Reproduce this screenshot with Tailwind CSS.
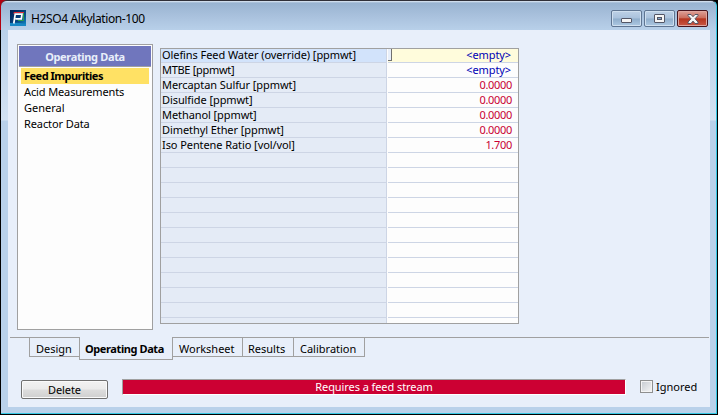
<!DOCTYPE html>
<html lang="en">
<head>
<meta charset="utf-8">
<title>H2SO4 Alkylation-100</title>
<script src="https://cdn.jsdelivr.net/npm/@tailwindcss/browser@4"></script>
</head>
<body class="w-[718px] h-[415px] overflow-hidden bg-black font-['Noto_Sans','Open_Sans',sans-serif] text-[11px] leading-[16px] text-black whitespace-nowrap">
<div class="relative w-[718px] h-[415px] bg-[linear-gradient(to_bottom,#b00010_0px,#b00010_30px,#000_30px)] overflow-hidden">
<div class="absolute inset-0 bg-black left-[8px]"></div>
<div class="absolute left-px top-0 w-[716px] h-[414px] rounded-t-[6px] border-t border-t-[#303038] border-r border-r-[#35c8e4] border-b border-b-[#35c8e4] bg-[linear-gradient(to_bottom,#e1ebf5_0px,#99b4d1_2px,#a9c1dd_15px,#b9d1ea_30px,#d3e2f2_119px,#b9d1ea_120px,#b9d1ea_100%)] flex flex-col pl-[7px] pr-[6px] pb-[6px]">
  <header class="h-[29px] shrink-0 flex items-start">
    <svg class="mt-[9px] ml-[2px] mr-[5px]" width="16" height="16" viewBox="0 0 16 16">
      <defs><linearGradient id="logo" x1="0" y1="0" x2="1" y2="1"><stop offset="0" stop-color="#001c52"/><stop offset=".55" stop-color="#06427e"/><stop offset="1" stop-color="#128fca"/></linearGradient></defs>
      <rect width="16" height="16" fill="url(#logo)"/>
      <path d="M0 13Q7 12 16 14V16H0z" fill="#1787c4"/>
      <path d="M4 4V2.5H14" fill="none" stroke="#e02a35"/>
      <path d="M13.5 3V10.5H8" fill="none" stroke="#2f9e4a"/>
      <path d="M3.8 13.5L5.2 4.2H12L11.3 8.8H5.5" fill="none" stroke="#fff" stroke-width="1.7"/>
    </svg>
    <h1 class="mt-[10px] text-[12px] leading-[16px] tracking-[-0.38px]">H2SO4 Alkylation-100</h1>
    <div class="ml-auto mr-[2px] mt-[9px] flex gap-[2px]">
      <div class="w-[31px] h-[17px] rounded-[2px] border border-[#5f7592] shadow-[inset_0_0_0_1px_#cfdfef] bg-[linear-gradient(#bed1e6_0%,#a9c1dc_48%,#8fadcb_52%,#adc8e2_100%)] flex justify-center">
        <svg width="11" height="5" class="mt-[7px]" viewBox="0 0 11 5"><rect x=".5" y=".5" width="10" height="4" rx=".5" fill="#f5f5f5" stroke="#535666"/></svg>
      </div>
      <div class="w-[31px] h-[17px] rounded-[2px] border border-[#5f7592] shadow-[inset_0_0_0_1px_#cfdfef] bg-[linear-gradient(#bed1e6_0%,#a9c1dc_48%,#8fadcb_52%,#adc8e2_100%)] flex justify-center">
        <svg width="11" height="9" class="mt-[3px]" viewBox="0 0 11 9"><rect x=".5" y=".5" width="10" height="8" rx=".5" fill="#f5f5f5" stroke="#535666"/><rect x="3.5" y="3.5" width="4" height="2" fill="#86a8cc" stroke="#535666"/></svg>
      </div>
      <div class="w-[31px] h-[17px] rounded-[2px] border border-[#47141d] shadow-[inset_0_0_0_1px_#dfa69f] bg-[linear-gradient(#dda198_0%,#cb6d5d_46%,#b5351f_52%,#c95845_100%)] flex justify-center">
        <svg width="12" height="10" class="mt-[3px]" viewBox="0 0 12 10"><path d="M1 .5H4L6 2.7L8 .5H11V1.5L8 4.8L11 8V9.5H8L6 7.1L4 9.5H1V8L4 4.8L1 1.5z" fill="#f5f5f5" stroke="#535666"/></svg>
      </div>
    </div>
  </header>

  <main class="h-[377px] w-[702px] bg-[#e8effa] flex flex-col">
    <section class="flex h-[307px] pl-[9px] pt-[14px] items-start">
      <nav class="w-[136px] h-[286px] border border-[#a0a0a0] bg-[#fdfdfd] p-px">
        <h2 class="h-[21px] border-b border-[#a0a0a0] bg-[#7076bd] text-center text-[#e8effa] font-bold leading-[22px] tracking-[-0.35px]">Operating Data</h2>
        <ul class="mt-px px-[2px] leading-[16px]">
          <li class="h-[16px] pl-[3px] bg-[#ffe164] font-bold tracking-[-0.5px]">Feed Impurities</li>
          <li class="h-[16px] pl-[3px] leading-[15px] tracking-[-0.12px]">Acid Measurements</li>
          <li class="h-[16px] pl-[3px] leading-[15px]">General</li>
          <li class="h-[16px] pl-[3px] leading-[15px] tracking-[-0.1px]">Reactor Data</li>
        </ul>
      </nav>
      <div class="mt-[4px] ml-[7px] w-[359px] h-[276px] border border-[#a0a0a0] flex bg-[#fdfdfd] leading-[14px]">
        <div class="w-[226px] shrink-0 bg-[repeating-linear-gradient(to_bottom,#e4ebf6_0px,#e4ebf6_14px,#cdd5e5_14px,#cdd5e5_15px)] bg-[position:0_-1px] border-r border-[#cdd5e5] tracking-[-0.08px]">
          <div class="h-[13px] pl-px bg-[#d2e3fb] leading-[12px]">Olefins Feed Water (override) [ppmwt]</div>
          <div class="mt-px h-[15px] pl-px tracking-[-0.3px]">MTBE [ppmwt]</div>
          <div class="h-[15px] pl-px">Mercaptan Sulfur [ppmwt]</div>
          <div class="h-[15px] pl-px">Disulfide [ppmwt]</div>
          <div class="h-[15px] pl-px">Methanol [ppmwt]</div>
          <div class="h-[15px] pl-px">Dimethyl Ether [ppmwt]</div>
          <div class="h-[15px] pl-px">Iso Pentene Ratio [vol/vol]</div>
        </div>
        <div class="ml-px flex-1 text-right text-[#c80032] tracking-[-0.3px] bg-[repeating-linear-gradient(to_bottom,#fdfdfd_0px,#fdfdfd_14px,#cdd5e5_14px,#cdd5e5_15px)] bg-[position:0_-1px]">
          <div class="h-[13px] flex justify-between bg-[#fffcdc] text-[#0000b4] leading-[12px] pr-[7px] tracking-[-0.1px]"><span class="w-[4px] h-[12px] bg-[#e8effa] border-r border-b border-[#707070]"></span><span>&lt;empty&gt;</span></div>
          <div class="mt-px h-[15px] pr-[7px] text-[#0000b4] tracking-[-0.1px]">&lt;empty&gt;</div>
          <div class="h-[15px] pr-[6px]">0.0000</div>
          <div class="h-[15px] pr-[6px]">0.0000</div>
          <div class="h-[15px] pr-[6px]">0.0000</div>
          <div class="h-[15px] pr-[6px]">0.0000</div>
          <div class="h-[15px] pr-[6px]">1.700</div>
        </div>
      </div>
    </section>
    <div class="flex h-[42px] px-[2px] pr-px items-start leading-[22px]">
      <div class="w-[19px] border-t border-[#a0a0a0]"></div>
      <div class="w-[50px] h-[20px] border-t border-b border-l border-[#a0a0a0] pl-[6px]">Design</div>
      <div class="w-[94px] h-[23px] border-l border-r border-b border-[#a0a0a0] pl-[5px] pt-px font-bold tracking-[-0.4px]">Operating Data</div>
      <div class="w-[70px] h-[20px] border-t border-b border-r border-[#a0a0a0] pl-[6px]">Worksheet</div>
      <div class="w-[51px] h-[20px] border-t border-b border-r border-[#a0a0a0] pl-[5px]">Results</div>
      <div class="w-[71px] h-[20px] border-t border-b border-r border-[#a0a0a0] pl-[6px]">Calibration</div>
      <div class="flex-1 border-t border-[#a0a0a0]"></div>
    </div>
    <footer class="flex items-start pl-[13px]">
      <button class="mt-px w-[87px] h-[19px] rounded-[2px] border border-[#707070] shadow-[inset_0_0_0_1px_#fafafa] bg-[linear-gradient(#f2f2f2_0%,#ebebeb_48%,#dddddd_52%,#cfcfcf_100%)] leading-[17px] tracking-[-0.1px]">Delete</button>
      <div class="ml-[14px] w-[504px] h-[16px] border border-t-[#a0a0a0] border-l-[#a0a0a0] border-r-white border-b-white bg-[#cc0033] text-white text-center leading-[13px] tracking-[-0.08px]">Requires a feed stream</div>
      <label class="ml-[14px] flex items-start leading-[16px]"><span class="mt-px mr-[3px] w-[13px] h-[13px] border border-[#8e8f8f] bg-[linear-gradient(135deg,#c5cad0,#f6f6f6)] shadow-[inset_0_0_0_1px_#f4f4f4]"></span>Ignored</label>
    </footer>
  </main>
</div>
</div>
</body>
</html>
